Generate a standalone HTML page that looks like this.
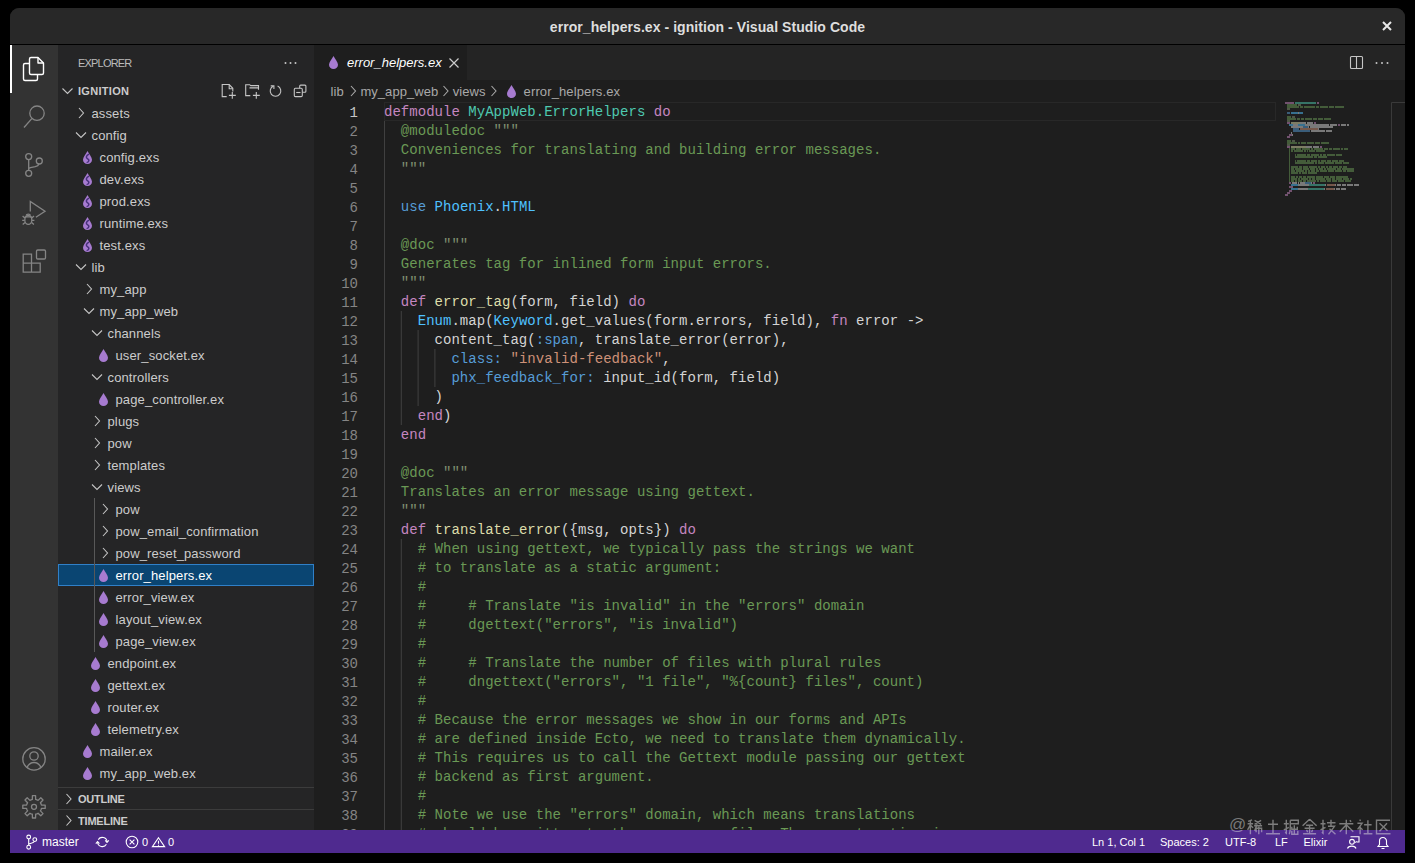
<!DOCTYPE html><html><head><meta charset="utf-8"><style>
*{margin:0;padding:0;box-sizing:border-box}
html,body{width:1415px;height:863px;overflow:hidden;background:#000}
body{position:relative;font-family:"Liberation Sans",sans-serif;color:#cccccc}
.a{position:absolute}
.win{position:absolute;left:10px;top:8px;width:1395px;height:845px;background:#1e1e1e;border-radius:9px 9px 0 0;overflow:hidden}
.mono{font-family:"Liberation Mono",monospace;font-size:14px;white-space:pre}
.row{position:absolute;left:58px;width:256px;height:22px;font-size:13px;line-height:22px;white-space:pre;color:#cccccc}
.ln{position:absolute;width:60px;text-align:right;font-family:"Liberation Mono",monospace;font-size:14px;line-height:19px;color:#858585}
.cl{position:absolute;left:384px;font-family:"Liberation Mono",monospace;font-size:14px;line-height:19px;white-space:pre;letter-spacing:0.028px}
.sb{position:absolute;top:831px;height:22px;line-height:22px;font-size:11px;color:#ffffff;white-space:pre}
</style></head><body>
<div class="win">
</div>

<div class="a" style="left:10px;top:8px;width:1395px;height:36px;background:#282828;border-radius:9px 9px 0 0"></div>
<div class="a" style="left:10px;top:44px;width:1395px;height:1px;background:#000000"></div>
<div class="a" style="left:10px;top:8px;width:1395px;height:36px;line-height:39px;text-align:center;font-weight:bold;font-size:14px;letter-spacing:0.06px;color:#dedede">error_helpers.ex - ignition - Visual Studio Code</div>
<div class="a" style="left:10px;top:45px;width:48px;height:786px;background:#333333"></div>
<div class="a" style="left:10px;top:45px;width:2px;height:48px;background:#ffffff"></div>
<div class="a" style="left:58px;top:45px;width:256px;height:786px;background:#252526"></div>
<div class="a" style="left:314px;top:45px;width:1091px;height:35px;background:#242424"></div>
<div class="a" style="left:314px;top:45px;width:153px;height:35px;background:#1e1e1e"></div>
<div class="a" style="left:314px;top:80px;width:1091px;height:751px;background:#1e1e1e"></div>
<div class="a" style="left:78px;top:52px;height:22px;line-height:22px;font-size:11px;letter-spacing:-0.8px;color:#bbbbbb">EXPLORER</div>
<div class="a" style="left:78px;top:80px;height:22px;line-height:22px;font-size:11px;font-weight:bold;letter-spacing:0.3px;color:#cccccc">IGNITION</div>
<div class="a" style="left:78px;top:787px;width:236px;height:1px;background:#3c3c3c"></div>
<div class="a" style="left:58px;top:787px;width:256px;height:1px;background:#3c3c3c"></div>
<div class="a" style="left:58px;top:809px;width:256px;height:1px;background:#3c3c3c"></div>
<div class="a" style="left:78px;top:788px;height:21px;line-height:22px;font-size:11px;font-weight:bold;letter-spacing:-0.25px;color:#cccccc">OUTLINE</div>
<div class="a" style="left:78px;top:810px;height:21px;line-height:22px;font-size:11px;font-weight:bold;letter-spacing:-0.2px;color:#cccccc">TIMELINE</div>
<div class="a" style="left:91.5px;top:103px;height:22px;line-height:22px;font-size:13px;letter-spacing:0.13px;white-space:pre;color:#cccccc">assets</div>
<div class="a" style="left:91.5px;top:125px;height:22px;line-height:22px;font-size:13px;letter-spacing:0.13px;white-space:pre;color:#cccccc">config</div>
<div class="a" style="left:99.5px;top:147px;height:22px;line-height:22px;font-size:13px;letter-spacing:0.13px;white-space:pre;color:#cccccc">config.exs</div>
<div class="a" style="left:99.5px;top:169px;height:22px;line-height:22px;font-size:13px;letter-spacing:0.13px;white-space:pre;color:#cccccc">dev.exs</div>
<div class="a" style="left:99.5px;top:191px;height:22px;line-height:22px;font-size:13px;letter-spacing:0.13px;white-space:pre;color:#cccccc">prod.exs</div>
<div class="a" style="left:99.5px;top:213px;height:22px;line-height:22px;font-size:13px;letter-spacing:0.13px;white-space:pre;color:#cccccc">runtime.exs</div>
<div class="a" style="left:99.5px;top:235px;height:22px;line-height:22px;font-size:13px;letter-spacing:0.13px;white-space:pre;color:#cccccc">test.exs</div>
<div class="a" style="left:91.5px;top:257px;height:22px;line-height:22px;font-size:13px;letter-spacing:0.13px;white-space:pre;color:#cccccc">lib</div>
<div class="a" style="left:99.5px;top:279px;height:22px;line-height:22px;font-size:13px;letter-spacing:0.13px;white-space:pre;color:#cccccc">my_app</div>
<div class="a" style="left:99.5px;top:301px;height:22px;line-height:22px;font-size:13px;letter-spacing:0.13px;white-space:pre;color:#cccccc">my_app_web</div>
<div class="a" style="left:107.5px;top:323px;height:22px;line-height:22px;font-size:13px;letter-spacing:0.13px;white-space:pre;color:#cccccc">channels</div>
<div class="a" style="left:115.5px;top:345px;height:22px;line-height:22px;font-size:13px;letter-spacing:0.13px;white-space:pre;color:#cccccc">user_socket.ex</div>
<div class="a" style="left:107.5px;top:367px;height:22px;line-height:22px;font-size:13px;letter-spacing:0.13px;white-space:pre;color:#cccccc">controllers</div>
<div class="a" style="left:115.5px;top:389px;height:22px;line-height:22px;font-size:13px;letter-spacing:0.13px;white-space:pre;color:#cccccc">page_controller.ex</div>
<div class="a" style="left:107.5px;top:411px;height:22px;line-height:22px;font-size:13px;letter-spacing:0.13px;white-space:pre;color:#cccccc">plugs</div>
<div class="a" style="left:107.5px;top:433px;height:22px;line-height:22px;font-size:13px;letter-spacing:0.13px;white-space:pre;color:#cccccc">pow</div>
<div class="a" style="left:107.5px;top:455px;height:22px;line-height:22px;font-size:13px;letter-spacing:0.13px;white-space:pre;color:#cccccc">templates</div>
<div class="a" style="left:107.5px;top:477px;height:22px;line-height:22px;font-size:13px;letter-spacing:0.13px;white-space:pre;color:#cccccc">views</div>
<div class="a" style="left:115.5px;top:499px;height:22px;line-height:22px;font-size:13px;letter-spacing:0.13px;white-space:pre;color:#cccccc">pow</div>
<div class="a" style="left:115.5px;top:521px;height:22px;line-height:22px;font-size:13px;letter-spacing:0.13px;white-space:pre;color:#cccccc">pow_email_confirmation</div>
<div class="a" style="left:115.5px;top:543px;height:22px;line-height:22px;font-size:13px;letter-spacing:0.13px;white-space:pre;color:#cccccc">pow_reset_password</div>
<div class="a" style="left:58px;top:564px;width:256px;height:22px;background:#0a4572;border:1px solid #3080c8"></div>
<div class="a" style="left:115.5px;top:565px;height:22px;line-height:22px;font-size:13px;letter-spacing:0.13px;white-space:pre;color:#ffffff">error_helpers.ex</div>
<div class="a" style="left:115.5px;top:587px;height:22px;line-height:22px;font-size:13px;letter-spacing:0.13px;white-space:pre;color:#cccccc">error_view.ex</div>
<div class="a" style="left:115.5px;top:609px;height:22px;line-height:22px;font-size:13px;letter-spacing:0.13px;white-space:pre;color:#cccccc">layout_view.ex</div>
<div class="a" style="left:115.5px;top:631px;height:22px;line-height:22px;font-size:13px;letter-spacing:0.13px;white-space:pre;color:#cccccc">page_view.ex</div>
<div class="a" style="left:107.5px;top:653px;height:22px;line-height:22px;font-size:13px;letter-spacing:0.13px;white-space:pre;color:#cccccc">endpoint.ex</div>
<div class="a" style="left:107.5px;top:675px;height:22px;line-height:22px;font-size:13px;letter-spacing:0.13px;white-space:pre;color:#cccccc">gettext.ex</div>
<div class="a" style="left:107.5px;top:697px;height:22px;line-height:22px;font-size:13px;letter-spacing:0.13px;white-space:pre;color:#cccccc">router.ex</div>
<div class="a" style="left:107.5px;top:719px;height:22px;line-height:22px;font-size:13px;letter-spacing:0.13px;white-space:pre;color:#cccccc">telemetry.ex</div>
<div class="a" style="left:99.5px;top:741px;height:22px;line-height:22px;font-size:13px;letter-spacing:0.13px;white-space:pre;color:#cccccc">mailer.ex</div>
<div class="a" style="left:99.5px;top:763px;height:22px;line-height:22px;font-size:13px;letter-spacing:0.13px;white-space:pre;color:#cccccc">my_app_web.ex</div>
<div class="a" style="left:347px;top:52px;height:22px;line-height:22px;font-size:13px;font-style:italic;color:#ffffff;white-space:pre">error_helpers.ex</div>
<div class="a" style="left:330.5px;top:81px;height:22px;line-height:22px;font-size:13px;letter-spacing:0.05px;color:#a9a9a9;white-space:pre">lib</div>
<div class="a" style="left:360.4px;top:81px;height:22px;line-height:22px;font-size:13px;letter-spacing:0.05px;color:#a9a9a9;white-space:pre">my_app_web</div>
<div class="a" style="left:452.8px;top:81px;height:22px;line-height:22px;font-size:13px;letter-spacing:0.05px;color:#a9a9a9;white-space:pre">views</div>
<div class="a" style="left:523.6px;top:81px;height:22px;line-height:22px;font-size:13px;letter-spacing:0.12px;color:#a9a9a9;white-space:pre">error_helpers.ex</div>
<div class="ln" style="left:298px;top:104px;color:#c6c6c6">1</div>
<div class="ln" style="left:298px;top:123px;color:#858585">2</div>
<div class="ln" style="left:298px;top:142px;color:#858585">3</div>
<div class="ln" style="left:298px;top:161px;color:#858585">4</div>
<div class="ln" style="left:298px;top:180px;color:#858585">5</div>
<div class="ln" style="left:298px;top:199px;color:#858585">6</div>
<div class="ln" style="left:298px;top:218px;color:#858585">7</div>
<div class="ln" style="left:298px;top:237px;color:#858585">8</div>
<div class="ln" style="left:298px;top:256px;color:#858585">9</div>
<div class="ln" style="left:298px;top:275px;color:#858585">10</div>
<div class="ln" style="left:298px;top:294px;color:#858585">11</div>
<div class="ln" style="left:298px;top:313px;color:#858585">12</div>
<div class="ln" style="left:298px;top:332px;color:#858585">13</div>
<div class="ln" style="left:298px;top:351px;color:#858585">14</div>
<div class="ln" style="left:298px;top:370px;color:#858585">15</div>
<div class="ln" style="left:298px;top:389px;color:#858585">16</div>
<div class="ln" style="left:298px;top:408px;color:#858585">17</div>
<div class="ln" style="left:298px;top:427px;color:#858585">18</div>
<div class="ln" style="left:298px;top:446px;color:#858585">19</div>
<div class="ln" style="left:298px;top:465px;color:#858585">20</div>
<div class="ln" style="left:298px;top:484px;color:#858585">21</div>
<div class="ln" style="left:298px;top:503px;color:#858585">22</div>
<div class="ln" style="left:298px;top:522px;color:#858585">23</div>
<div class="ln" style="left:298px;top:541px;color:#858585">24</div>
<div class="ln" style="left:298px;top:560px;color:#858585">25</div>
<div class="ln" style="left:298px;top:579px;color:#858585">26</div>
<div class="ln" style="left:298px;top:598px;color:#858585">27</div>
<div class="ln" style="left:298px;top:617px;color:#858585">28</div>
<div class="ln" style="left:298px;top:636px;color:#858585">29</div>
<div class="ln" style="left:298px;top:655px;color:#858585">30</div>
<div class="ln" style="left:298px;top:674px;color:#858585">31</div>
<div class="ln" style="left:298px;top:693px;color:#858585">32</div>
<div class="ln" style="left:298px;top:712px;color:#858585">33</div>
<div class="ln" style="left:298px;top:731px;color:#858585">34</div>
<div class="ln" style="left:298px;top:750px;color:#858585">35</div>
<div class="ln" style="left:298px;top:769px;color:#858585">36</div>
<div class="ln" style="left:298px;top:788px;color:#858585">37</div>
<div class="ln" style="left:298px;top:807px;color:#858585">38</div>
<div class="ln" style="left:298px;top:826px;color:#858585">39</div>
<div class="a" style="left:384px;top:102px;width:892px;height:19px;border:1px solid #282828"></div>
<div class="cl" style="top:103px"><span style="color:#c586c0">defmodule</span><span style="color:#d4d4d4"> </span><span style="color:#4ec9b0">MyAppWeb.ErrorHelpers</span><span style="color:#d4d4d4"> </span><span style="color:#c586c0">do</span></div>
<div class="cl" style="top:122px"><span style="color:#d4d4d4">  </span><span style="color:#6a9955">@moduledoc</span><span style="color:#d4d4d4"> </span><span style="color:#7f8f70">&quot;&quot;&quot;</span></div>
<div class="cl" style="top:141px"><span style="color:#d4d4d4">  </span><span style="color:#6a9955">Conveniences for translating and building error messages.</span></div>
<div class="cl" style="top:160px"><span style="color:#d4d4d4">  </span><span style="color:#7f8f70">&quot;&quot;&quot;</span></div>
<div class="cl" style="top:179px"></div>
<div class="cl" style="top:198px"><span style="color:#d4d4d4">  </span><span style="color:#569cd6">use</span><span style="color:#d4d4d4"> </span><span style="color:#4fc1ff">Phoenix</span><span style="color:#d4d4d4">.</span><span style="color:#4fc1ff">HTML</span></div>
<div class="cl" style="top:217px"></div>
<div class="cl" style="top:236px"><span style="color:#d4d4d4">  </span><span style="color:#6a9955">@doc</span><span style="color:#d4d4d4"> </span><span style="color:#7f8f70">&quot;&quot;&quot;</span></div>
<div class="cl" style="top:255px"><span style="color:#d4d4d4">  </span><span style="color:#6a9955">Generates tag for inlined form input errors.</span></div>
<div class="cl" style="top:274px"><span style="color:#d4d4d4">  </span><span style="color:#7f8f70">&quot;&quot;&quot;</span></div>
<div class="cl" style="top:293px"><span style="color:#d4d4d4">  </span><span style="color:#c586c0">def</span><span style="color:#d4d4d4"> </span><span style="color:#dcdcaa">error_tag</span><span style="color:#d4d4d4">(form, field) </span><span style="color:#c586c0">do</span></div>
<div class="cl" style="top:312px"><span style="color:#d4d4d4">    </span><span style="color:#4fc1ff">Enum</span><span style="color:#d4d4d4">.map(</span><span style="color:#4fc1ff">Keyword</span><span style="color:#d4d4d4">.get_values(form.errors, field), </span><span style="color:#c586c0">fn</span><span style="color:#d4d4d4"> error -&gt;</span></div>
<div class="cl" style="top:331px"><span style="color:#d4d4d4">      </span><span style="color:#d4d4d4">content_tag(</span><span style="color:#569cd6">:span</span><span style="color:#d4d4d4">, translate_error(error),</span></div>
<div class="cl" style="top:350px"><span style="color:#d4d4d4">        </span><span style="color:#569cd6">class:</span><span style="color:#d4d4d4"> </span><span style="color:#ce9178">&quot;invalid-feedback&quot;</span><span style="color:#d4d4d4">,</span></div>
<div class="cl" style="top:369px"><span style="color:#d4d4d4">        </span><span style="color:#569cd6">phx_feedback_for:</span><span style="color:#d4d4d4"> input_id(form, field)</span></div>
<div class="cl" style="top:388px"><span style="color:#d4d4d4">      </span><span style="color:#d4d4d4">)</span></div>
<div class="cl" style="top:407px"><span style="color:#d4d4d4">    </span><span style="color:#c586c0">end</span><span style="color:#d4d4d4">)</span></div>
<div class="cl" style="top:426px"><span style="color:#d4d4d4">  </span><span style="color:#c586c0">end</span></div>
<div class="cl" style="top:445px"></div>
<div class="cl" style="top:464px"><span style="color:#d4d4d4">  </span><span style="color:#6a9955">@doc</span><span style="color:#d4d4d4"> </span><span style="color:#7f8f70">&quot;&quot;&quot;</span></div>
<div class="cl" style="top:483px"><span style="color:#d4d4d4">  </span><span style="color:#6a9955">Translates an error message using gettext.</span></div>
<div class="cl" style="top:502px"><span style="color:#d4d4d4">  </span><span style="color:#7f8f70">&quot;&quot;&quot;</span></div>
<div class="cl" style="top:521px"><span style="color:#d4d4d4">  </span><span style="color:#c586c0">def</span><span style="color:#d4d4d4"> </span><span style="color:#dcdcaa">translate_error</span><span style="color:#d4d4d4">({msg, opts}) </span><span style="color:#c586c0">do</span></div>
<div class="cl" style="top:540px"><span style="color:#d4d4d4">    </span><span style="color:#6a9955"># When using gettext, we typically pass the strings we want</span></div>
<div class="cl" style="top:559px"><span style="color:#d4d4d4">    </span><span style="color:#6a9955"># to translate as a static argument:</span></div>
<div class="cl" style="top:578px"><span style="color:#d4d4d4">    </span><span style="color:#6a9955">#</span></div>
<div class="cl" style="top:597px"><span style="color:#d4d4d4">    </span><span style="color:#6a9955">#     # Translate &quot;is invalid&quot; in the &quot;errors&quot; domain</span></div>
<div class="cl" style="top:616px"><span style="color:#d4d4d4">    </span><span style="color:#6a9955">#     dgettext(&quot;errors&quot;, &quot;is invalid&quot;)</span></div>
<div class="cl" style="top:635px"><span style="color:#d4d4d4">    </span><span style="color:#6a9955">#</span></div>
<div class="cl" style="top:654px"><span style="color:#d4d4d4">    </span><span style="color:#6a9955">#     # Translate the number of files with plural rules</span></div>
<div class="cl" style="top:673px"><span style="color:#d4d4d4">    </span><span style="color:#6a9955">#     dngettext(&quot;errors&quot;, &quot;1 file&quot;, &quot;%{count} files&quot;, count)</span></div>
<div class="cl" style="top:692px"><span style="color:#d4d4d4">    </span><span style="color:#6a9955">#</span></div>
<div class="cl" style="top:711px"><span style="color:#d4d4d4">    </span><span style="color:#6a9955"># Because the error messages we show in our forms and APIs</span></div>
<div class="cl" style="top:730px"><span style="color:#d4d4d4">    </span><span style="color:#6a9955"># are defined inside Ecto, we need to translate them dynamically.</span></div>
<div class="cl" style="top:749px"><span style="color:#d4d4d4">    </span><span style="color:#6a9955"># This requires us to call the Gettext module passing our gettext</span></div>
<div class="cl" style="top:768px"><span style="color:#d4d4d4">    </span><span style="color:#6a9955"># backend as first argument.</span></div>
<div class="cl" style="top:787px"><span style="color:#d4d4d4">    </span><span style="color:#6a9955">#</span></div>
<div class="cl" style="top:806px"><span style="color:#d4d4d4">    </span><span style="color:#6a9955"># Note we use the &quot;errors&quot; domain, which means translations</span></div>
<div class="cl" style="top:825px"><span style="color:#d4d4d4">    </span><span style="color:#6a9955"># should be written to the errors.po file. The :count option is</span></div>
<div class="a" style="left:10px;top:830px;width:1395px;height:23px;background:#4f2a8f"></div>
<div class="sb" style="left:42px;font-size:12px">master</div>
<div class="sb" style="left:142px">0</div>
<div class="sb" style="left:168px">0</div>
<div class="sb" style="left:1092px">Ln 1, Col 1</div>
<div class="sb" style="left:1160px">Spaces: 2</div>
<div class="sb" style="left:1225px">UTF-8</div>
<div class="sb" style="left:1275px">LF</div>
<div class="sb" style="left:1303.5px">Elixir</div>
<svg class="a" style="left:0;top:0" width="1415" height="863" viewBox="0 0 1415 863"><path d="M62.5 88.5 L67.5 93.5 L72.5 88.5" fill="none" stroke="#c5c5c5" stroke-width="1.1"/><path d="M79.0 108 L83.5 113 L79.0 118" fill="none" stroke="#c5c5c5" stroke-width="1.1"/><path d="M76 132.5 L81 137.5 L86 132.5" fill="none" stroke="#c5c5c5" stroke-width="1.1"/><path d="M87.5 151 C86 154 83 157 83 159.8 C83 162.3 85 164 87.5 164 C90 164 92 162.3 92 159.8 C92 157 89 154 87.5 151 Z" fill="#a77bd0"/><path d="M89 154.2 C86.2 155.6 85.6 157.6 87.4 158.6 C89.6 159.8 89.4 161.8 86.6 162.6" fill="none" stroke="#47307a" stroke-width="1.5"/><path d="M87.5 173 C86 176 83 179 83 181.8 C83 184.3 85 186 87.5 186 C90 186 92 184.3 92 181.8 C92 179 89 176 87.5 173 Z" fill="#a77bd0"/><path d="M89 176.2 C86.2 177.6 85.6 179.6 87.4 180.6 C89.6 181.8 89.4 183.8 86.6 184.6" fill="none" stroke="#47307a" stroke-width="1.5"/><path d="M87.5 195 C86 198 83 201 83 203.8 C83 206.3 85 208 87.5 208 C90 208 92 206.3 92 203.8 C92 201 89 198 87.5 195 Z" fill="#a77bd0"/><path d="M89 198.2 C86.2 199.6 85.6 201.6 87.4 202.6 C89.6 203.8 89.4 205.8 86.6 206.6" fill="none" stroke="#47307a" stroke-width="1.5"/><path d="M87.5 217 C86 220 83 223 83 225.8 C83 228.3 85 230 87.5 230 C90 230 92 228.3 92 225.8 C92 223 89 220 87.5 217 Z" fill="#a77bd0"/><path d="M89 220.2 C86.2 221.6 85.6 223.6 87.4 224.6 C89.6 225.8 89.4 227.8 86.6 228.6" fill="none" stroke="#47307a" stroke-width="1.5"/><path d="M87.5 239 C86 242 83 245 83 247.8 C83 250.3 85 252 87.5 252 C90 252 92 250.3 92 247.8 C92 245 89 242 87.5 239 Z" fill="#a77bd0"/><path d="M89 242.2 C86.2 243.6 85.6 245.6 87.4 246.6 C89.6 247.8 89.4 249.8 86.6 250.6" fill="none" stroke="#47307a" stroke-width="1.5"/><path d="M76 264.5 L81 269.5 L86 264.5" fill="none" stroke="#c5c5c5" stroke-width="1.1"/><path d="M87.0 284 L91.5 289 L87.0 294" fill="none" stroke="#c5c5c5" stroke-width="1.1"/><path d="M84 308.5 L89 313.5 L94 308.5" fill="none" stroke="#c5c5c5" stroke-width="1.1"/><path d="M92 330.5 L97 335.5 L102 330.5" fill="none" stroke="#c5c5c5" stroke-width="1.1"/><path d="M103.5 349 C102 352 99 355 99 357.8 C99 360.3 101 362 103.5 362 C106 362 108 360.3 108 357.8 C108 355 105 352 103.5 349 Z" fill="#a77bd0"/><path d="M92 374.5 L97 379.5 L102 374.5" fill="none" stroke="#c5c5c5" stroke-width="1.1"/><path d="M103.5 393 C102 396 99 399 99 401.8 C99 404.3 101 406 103.5 406 C106 406 108 404.3 108 401.8 C108 399 105 396 103.5 393 Z" fill="#a77bd0"/><path d="M95.0 416 L99.5 421 L95.0 426" fill="none" stroke="#c5c5c5" stroke-width="1.1"/><path d="M95.0 438 L99.5 443 L95.0 448" fill="none" stroke="#c5c5c5" stroke-width="1.1"/><path d="M95.0 460 L99.5 465 L95.0 470" fill="none" stroke="#c5c5c5" stroke-width="1.1"/><path d="M92 484.5 L97 489.5 L102 484.5" fill="none" stroke="#c5c5c5" stroke-width="1.1"/><path d="M103.0 504 L107.5 509 L103.0 514" fill="none" stroke="#c5c5c5" stroke-width="1.1"/><path d="M103.0 526 L107.5 531 L103.0 536" fill="none" stroke="#c5c5c5" stroke-width="1.1"/><path d="M103.0 548 L107.5 553 L103.0 558" fill="none" stroke="#c5c5c5" stroke-width="1.1"/><path d="M103.5 569 C102 572 99 575 99 577.8 C99 580.3 101 582 103.5 582 C106 582 108 580.3 108 577.8 C108 575 105 572 103.5 569 Z" fill="#a77bd0"/><path d="M103.5 591 C102 594 99 597 99 599.8 C99 602.3 101 604 103.5 604 C106 604 108 602.3 108 599.8 C108 597 105 594 103.5 591 Z" fill="#a77bd0"/><path d="M103.5 613 C102 616 99 619 99 621.8 C99 624.3 101 626 103.5 626 C106 626 108 624.3 108 621.8 C108 619 105 616 103.5 613 Z" fill="#a77bd0"/><path d="M103.5 635 C102 638 99 641 99 643.8 C99 646.3 101 648 103.5 648 C106 648 108 646.3 108 643.8 C108 641 105 638 103.5 635 Z" fill="#a77bd0"/><path d="M95.5 657 C94 660 91 663 91 665.8 C91 668.3 93 670 95.5 670 C98 670 100 668.3 100 665.8 C100 663 97 660 95.5 657 Z" fill="#a77bd0"/><path d="M95.5 679 C94 682 91 685 91 687.8 C91 690.3 93 692 95.5 692 C98 692 100 690.3 100 687.8 C100 685 97 682 95.5 679 Z" fill="#a77bd0"/><path d="M95.5 701 C94 704 91 707 91 709.8 C91 712.3 93 714 95.5 714 C98 714 100 712.3 100 709.8 C100 707 97 704 95.5 701 Z" fill="#a77bd0"/><path d="M95.5 723 C94 726 91 729 91 731.8 C91 734.3 93 736 95.5 736 C98 736 100 734.3 100 731.8 C100 729 97 726 95.5 723 Z" fill="#a77bd0"/><path d="M87.5 745 C86 748 83 751 83 753.8 C83 756.3 85 758 87.5 758 C90 758 92 756.3 92 753.8 C92 751 89 748 87.5 745 Z" fill="#a77bd0"/><path d="M87.5 767 C86 770 83 773 83 775.8 C83 778.3 85 780 87.5 780 C90 780 92 778.3 92 775.8 C92 773 89 770 87.5 767 Z" fill="#a77bd0"/><line x1="94.5" y1="498" x2="94.5" y2="652" stroke="#585858" stroke-width="1"/><g fill="none" stroke="#c5c5c5" stroke-width="1.1">
<path d="M226.7 96.6 h-4.5 v-12.1 h7 l3.6 3.8 v3.2"/>
<path d="M229.2 84.6 v4.2 h3.6"/>
<path d="M232.3 92 v6.8 M228.9 95.4 h6.9"/>
<path d="M250.3 95.6 h-4.6 v-10.9 h4 l1 0.9 h7.8 v4.2 M249.5 87.9 h9"/>
<path d="M256.3 92 v6.8 M252.9 95.4 h6.9"/>
<path d="M273.2 86.2 A5.3 5.3 0 1 0 277.6 86.1"/>
<path d="M270.7 85.9 h3.2 v3.1"/>
<path d="M299.7 88.2 v-2.1 a1 1 0 0 1 1 -1 h4.2 a1 1 0 0 1 1 1 v5.2 a1 1 0 0 1 -1 1 h-2.6"/>
<rect x="294.3" y="88.3" width="8" height="8.3" rx="1.1"/>
<path d="M296.2 92.5 h4.3"/>
</g><circle cx="285.5" cy="63" r="1" fill="#c5c5c5"/><circle cx="290.5" cy="63" r="1" fill="#c5c5c5"/><circle cx="295.5" cy="63" r="1" fill="#c5c5c5"/><path d="M66.5 794 L71 799 L66.5 804" fill="none" stroke="#c5c5c5" stroke-width="1.1"/><path d="M66.5 815.5 L71 820.5 L66.5 825.5" fill="none" stroke="#c5c5c5" stroke-width="1.1"/><path d="M333.5 56 C332 59 329 62 329 64.8 C329 67.3 331 69 333.5 69 C336 69 338 67.3 338 64.8 C338 62 335 59 333.5 56 Z" fill="#a77bd0"/><path d="M449.5 58.5 L458.5 67.5 M458.5 58.5 L449.5 67.5" stroke="#cccccc" stroke-width="1.2"/><g fill="none" stroke="#c5c5c5" stroke-width="1.1"><rect x="1350.5" y="56.5" width="12" height="12" rx="1"/><path d="M1356.5 56.5 v12"/></g><circle cx="1376.5" cy="63" r="1" fill="#c5c5c5"/><circle cx="1382" cy="63" r="1" fill="#c5c5c5"/><circle cx="1387.5" cy="63" r="1" fill="#c5c5c5"/><path d="M1383 22 L1391 30 M1391 22 L1383 30" stroke="#e8e8e8" stroke-width="2"/><path d="M351.0 86 L355.5 91 L351.0 96" fill="none" stroke="#a9a9a9" stroke-width="1.1"/><path d="M443.5 86 L448 91 L443.5 96" fill="none" stroke="#a9a9a9" stroke-width="1.1"/><path d="M491.5 86 L496 91 L491.5 96" fill="none" stroke="#a9a9a9" stroke-width="1.1"/><path d="M511.5 85 C510 88 507 91 507 93.8 C507 96.3 509 98 511.5 98 C514 98 516 96.3 516 93.8 C516 91 513 88 511.5 85 Z" fill="#a77bd0"/><line x1="384.5" y1="121" x2="384.5" y2="830" stroke="#404040" stroke-width="1"/><line x1="401.3" y1="311" x2="401.3" y2="425" stroke="#404040" stroke-width="1"/><line x1="418.1" y1="330" x2="418.1" y2="406" stroke="#404040" stroke-width="1"/><line x1="434.9" y1="349" x2="434.9" y2="387" stroke="#404040" stroke-width="1"/><line x1="401.3" y1="539" x2="401.3" y2="830" stroke="#404040" stroke-width="1"/><rect x="1285" y="102" width="9" height="2" fill="#c586c0" opacity="0.5"/><rect x="1295" y="102" width="21" height="2" fill="#4ec9b0" opacity="0.5"/><rect x="1317" y="102" width="2" height="2" fill="#c586c0" opacity="0.5"/><rect x="1287" y="104" width="10" height="2" fill="#6a9955" opacity="0.5"/><rect x="1298" y="104" width="3" height="2" fill="#7f8f70" opacity="0.5"/><rect x="1287" y="106" width="12" height="2" fill="#6a9955" opacity="0.5"/><rect x="1300" y="106" width="3" height="2" fill="#6a9955" opacity="0.5"/><rect x="1304" y="106" width="11" height="2" fill="#6a9955" opacity="0.5"/><rect x="1316" y="106" width="3" height="2" fill="#6a9955" opacity="0.5"/><rect x="1320" y="106" width="8" height="2" fill="#6a9955" opacity="0.5"/><rect x="1329" y="106" width="5" height="2" fill="#6a9955" opacity="0.5"/><rect x="1335" y="106" width="9" height="2" fill="#6a9955" opacity="0.5"/><rect x="1287" y="108" width="3" height="2" fill="#7f8f70" opacity="0.5"/><rect x="1287" y="112" width="3" height="2" fill="#569cd6" opacity="0.5"/><rect x="1291" y="112" width="7" height="2" fill="#4fc1ff" opacity="0.5"/><rect x="1298" y="112" width="1" height="2" fill="#d4d4d4" opacity="0.5"/><rect x="1299" y="112" width="4" height="2" fill="#4fc1ff" opacity="0.5"/><rect x="1287" y="116" width="4" height="2" fill="#6a9955" opacity="0.5"/><rect x="1292" y="116" width="3" height="2" fill="#7f8f70" opacity="0.5"/><rect x="1287" y="118" width="9" height="2" fill="#6a9955" opacity="0.5"/><rect x="1297" y="118" width="3" height="2" fill="#6a9955" opacity="0.5"/><rect x="1301" y="118" width="3" height="2" fill="#6a9955" opacity="0.5"/><rect x="1305" y="118" width="7" height="2" fill="#6a9955" opacity="0.5"/><rect x="1313" y="118" width="4" height="2" fill="#6a9955" opacity="0.5"/><rect x="1318" y="118" width="5" height="2" fill="#6a9955" opacity="0.5"/><rect x="1324" y="118" width="7" height="2" fill="#6a9955" opacity="0.5"/><rect x="1287" y="120" width="3" height="2" fill="#7f8f70" opacity="0.5"/><rect x="1287" y="122" width="3" height="2" fill="#c586c0" opacity="0.5"/><rect x="1291" y="122" width="9" height="2" fill="#dcdcaa" opacity="0.5"/><rect x="1300" y="122" width="6" height="2" fill="#d4d4d4" opacity="0.5"/><rect x="1307" y="122" width="6" height="2" fill="#d4d4d4" opacity="0.5"/><rect x="1314" y="122" width="2" height="2" fill="#c586c0" opacity="0.5"/><rect x="1289" y="124" width="4" height="2" fill="#4fc1ff" opacity="0.5"/><rect x="1293" y="124" width="5" height="2" fill="#d4d4d4" opacity="0.5"/><rect x="1298" y="124" width="7" height="2" fill="#4fc1ff" opacity="0.5"/><rect x="1305" y="124" width="24" height="2" fill="#d4d4d4" opacity="0.5"/><rect x="1330" y="124" width="7" height="2" fill="#d4d4d4" opacity="0.5"/><rect x="1338" y="124" width="2" height="2" fill="#c586c0" opacity="0.5"/><rect x="1341" y="124" width="5" height="2" fill="#d4d4d4" opacity="0.5"/><rect x="1347" y="124" width="2" height="2" fill="#d4d4d4" opacity="0.5"/><rect x="1291" y="126" width="12" height="2" fill="#d4d4d4" opacity="0.5"/><rect x="1303" y="126" width="5" height="2" fill="#569cd6" opacity="0.5"/><rect x="1308" y="126" width="1" height="2" fill="#d4d4d4" opacity="0.5"/><rect x="1310" y="126" width="23" height="2" fill="#d4d4d4" opacity="0.5"/><rect x="1293" y="128" width="6" height="2" fill="#569cd6" opacity="0.5"/><rect x="1300" y="128" width="18" height="2" fill="#ce9178" opacity="0.5"/><rect x="1318" y="128" width="1" height="2" fill="#d4d4d4" opacity="0.5"/><rect x="1293" y="130" width="17" height="2" fill="#569cd6" opacity="0.5"/><rect x="1311" y="130" width="14" height="2" fill="#d4d4d4" opacity="0.5"/><rect x="1326" y="130" width="6" height="2" fill="#d4d4d4" opacity="0.5"/><rect x="1291" y="132" width="1" height="2" fill="#d4d4d4" opacity="0.5"/><rect x="1289" y="134" width="3" height="2" fill="#c586c0" opacity="0.5"/><rect x="1292" y="134" width="1" height="2" fill="#d4d4d4" opacity="0.5"/><rect x="1287" y="136" width="3" height="2" fill="#c586c0" opacity="0.5"/><rect x="1287" y="140" width="4" height="2" fill="#6a9955" opacity="0.5"/><rect x="1292" y="140" width="3" height="2" fill="#7f8f70" opacity="0.5"/><rect x="1287" y="142" width="10" height="2" fill="#6a9955" opacity="0.5"/><rect x="1298" y="142" width="2" height="2" fill="#6a9955" opacity="0.5"/><rect x="1301" y="142" width="5" height="2" fill="#6a9955" opacity="0.5"/><rect x="1307" y="142" width="7" height="2" fill="#6a9955" opacity="0.5"/><rect x="1315" y="142" width="5" height="2" fill="#6a9955" opacity="0.5"/><rect x="1321" y="142" width="8" height="2" fill="#6a9955" opacity="0.5"/><rect x="1287" y="144" width="3" height="2" fill="#7f8f70" opacity="0.5"/><rect x="1287" y="146" width="3" height="2" fill="#c586c0" opacity="0.5"/><rect x="1291" y="146" width="15" height="2" fill="#dcdcaa" opacity="0.5"/><rect x="1306" y="146" width="6" height="2" fill="#d4d4d4" opacity="0.5"/><rect x="1313" y="146" width="6" height="2" fill="#d4d4d4" opacity="0.5"/><rect x="1320" y="146" width="2" height="2" fill="#c586c0" opacity="0.5"/><rect x="1289" y="148" width="1" height="2" fill="#6a9955" opacity="0.5"/><rect x="1291" y="148" width="4" height="2" fill="#6a9955" opacity="0.5"/><rect x="1296" y="148" width="5" height="2" fill="#6a9955" opacity="0.5"/><rect x="1302" y="148" width="8" height="2" fill="#6a9955" opacity="0.5"/><rect x="1311" y="148" width="2" height="2" fill="#6a9955" opacity="0.5"/><rect x="1314" y="148" width="9" height="2" fill="#6a9955" opacity="0.5"/><rect x="1324" y="148" width="4" height="2" fill="#6a9955" opacity="0.5"/><rect x="1329" y="148" width="3" height="2" fill="#6a9955" opacity="0.5"/><rect x="1333" y="148" width="7" height="2" fill="#6a9955" opacity="0.5"/><rect x="1341" y="148" width="2" height="2" fill="#6a9955" opacity="0.5"/><rect x="1344" y="148" width="4" height="2" fill="#6a9955" opacity="0.5"/><rect x="1289" y="150" width="1" height="2" fill="#6a9955" opacity="0.5"/><rect x="1291" y="150" width="2" height="2" fill="#6a9955" opacity="0.5"/><rect x="1294" y="150" width="9" height="2" fill="#6a9955" opacity="0.5"/><rect x="1304" y="150" width="2" height="2" fill="#6a9955" opacity="0.5"/><rect x="1307" y="150" width="1" height="2" fill="#6a9955" opacity="0.5"/><rect x="1309" y="150" width="6" height="2" fill="#6a9955" opacity="0.5"/><rect x="1316" y="150" width="9" height="2" fill="#6a9955" opacity="0.5"/><rect x="1289" y="152" width="1" height="2" fill="#6a9955" opacity="0.5"/><rect x="1289" y="154" width="1" height="2" fill="#6a9955" opacity="0.5"/><rect x="1295" y="154" width="1" height="2" fill="#6a9955" opacity="0.5"/><rect x="1297" y="154" width="9" height="2" fill="#6a9955" opacity="0.5"/><rect x="1307" y="154" width="3" height="2" fill="#6a9955" opacity="0.5"/><rect x="1311" y="154" width="8" height="2" fill="#6a9955" opacity="0.5"/><rect x="1320" y="154" width="2" height="2" fill="#6a9955" opacity="0.5"/><rect x="1323" y="154" width="3" height="2" fill="#6a9955" opacity="0.5"/><rect x="1327" y="154" width="8" height="2" fill="#6a9955" opacity="0.5"/><rect x="1336" y="154" width="6" height="2" fill="#6a9955" opacity="0.5"/><rect x="1289" y="156" width="1" height="2" fill="#6a9955" opacity="0.5"/><rect x="1295" y="156" width="18" height="2" fill="#6a9955" opacity="0.5"/><rect x="1314" y="156" width="3" height="2" fill="#6a9955" opacity="0.5"/><rect x="1318" y="156" width="9" height="2" fill="#6a9955" opacity="0.5"/><rect x="1289" y="158" width="1" height="2" fill="#6a9955" opacity="0.5"/><rect x="1289" y="160" width="1" height="2" fill="#6a9955" opacity="0.5"/><rect x="1295" y="160" width="1" height="2" fill="#6a9955" opacity="0.5"/><rect x="1297" y="160" width="9" height="2" fill="#6a9955" opacity="0.5"/><rect x="1307" y="160" width="3" height="2" fill="#6a9955" opacity="0.5"/><rect x="1311" y="160" width="6" height="2" fill="#6a9955" opacity="0.5"/><rect x="1318" y="160" width="2" height="2" fill="#6a9955" opacity="0.5"/><rect x="1321" y="160" width="5" height="2" fill="#6a9955" opacity="0.5"/><rect x="1327" y="160" width="4" height="2" fill="#6a9955" opacity="0.5"/><rect x="1332" y="160" width="6" height="2" fill="#6a9955" opacity="0.5"/><rect x="1339" y="160" width="5" height="2" fill="#6a9955" opacity="0.5"/><rect x="1289" y="162" width="1" height="2" fill="#6a9955" opacity="0.5"/><rect x="1295" y="162" width="19" height="2" fill="#6a9955" opacity="0.5"/><rect x="1315" y="162" width="2" height="2" fill="#6a9955" opacity="0.5"/><rect x="1318" y="162" width="6" height="2" fill="#6a9955" opacity="0.5"/><rect x="1325" y="162" width="9" height="2" fill="#6a9955" opacity="0.5"/><rect x="1335" y="162" width="7" height="2" fill="#6a9955" opacity="0.5"/><rect x="1343" y="162" width="6" height="2" fill="#6a9955" opacity="0.5"/><rect x="1289" y="164" width="1" height="2" fill="#6a9955" opacity="0.5"/><rect x="1289" y="166" width="1" height="2" fill="#6a9955" opacity="0.5"/><rect x="1291" y="166" width="7" height="2" fill="#6a9955" opacity="0.5"/><rect x="1299" y="166" width="3" height="2" fill="#6a9955" opacity="0.5"/><rect x="1303" y="166" width="5" height="2" fill="#6a9955" opacity="0.5"/><rect x="1309" y="166" width="8" height="2" fill="#6a9955" opacity="0.5"/><rect x="1318" y="166" width="2" height="2" fill="#6a9955" opacity="0.5"/><rect x="1321" y="166" width="4" height="2" fill="#6a9955" opacity="0.5"/><rect x="1326" y="166" width="2" height="2" fill="#6a9955" opacity="0.5"/><rect x="1329" y="166" width="3" height="2" fill="#6a9955" opacity="0.5"/><rect x="1333" y="166" width="5" height="2" fill="#6a9955" opacity="0.5"/><rect x="1339" y="166" width="3" height="2" fill="#6a9955" opacity="0.5"/><rect x="1343" y="166" width="4" height="2" fill="#6a9955" opacity="0.5"/><rect x="1289" y="168" width="1" height="2" fill="#6a9955" opacity="0.5"/><rect x="1291" y="168" width="3" height="2" fill="#6a9955" opacity="0.5"/><rect x="1295" y="168" width="7" height="2" fill="#6a9955" opacity="0.5"/><rect x="1303" y="168" width="6" height="2" fill="#6a9955" opacity="0.5"/><rect x="1310" y="168" width="5" height="2" fill="#6a9955" opacity="0.5"/><rect x="1316" y="168" width="2" height="2" fill="#6a9955" opacity="0.5"/><rect x="1319" y="168" width="4" height="2" fill="#6a9955" opacity="0.5"/><rect x="1324" y="168" width="2" height="2" fill="#6a9955" opacity="0.5"/><rect x="1327" y="168" width="9" height="2" fill="#6a9955" opacity="0.5"/><rect x="1337" y="168" width="4" height="2" fill="#6a9955" opacity="0.5"/><rect x="1342" y="168" width="12" height="2" fill="#6a9955" opacity="0.5"/><rect x="1289" y="170" width="1" height="2" fill="#6a9955" opacity="0.5"/><rect x="1291" y="170" width="4" height="2" fill="#6a9955" opacity="0.5"/><rect x="1296" y="170" width="8" height="2" fill="#6a9955" opacity="0.5"/><rect x="1305" y="170" width="2" height="2" fill="#6a9955" opacity="0.5"/><rect x="1308" y="170" width="2" height="2" fill="#6a9955" opacity="0.5"/><rect x="1311" y="170" width="4" height="2" fill="#6a9955" opacity="0.5"/><rect x="1316" y="170" width="3" height="2" fill="#6a9955" opacity="0.5"/><rect x="1320" y="170" width="7" height="2" fill="#6a9955" opacity="0.5"/><rect x="1328" y="170" width="6" height="2" fill="#6a9955" opacity="0.5"/><rect x="1335" y="170" width="7" height="2" fill="#6a9955" opacity="0.5"/><rect x="1343" y="170" width="3" height="2" fill="#6a9955" opacity="0.5"/><rect x="1347" y="170" width="7" height="2" fill="#6a9955" opacity="0.5"/><rect x="1289" y="172" width="1" height="2" fill="#6a9955" opacity="0.5"/><rect x="1291" y="172" width="7" height="2" fill="#6a9955" opacity="0.5"/><rect x="1299" y="172" width="2" height="2" fill="#6a9955" opacity="0.5"/><rect x="1302" y="172" width="5" height="2" fill="#6a9955" opacity="0.5"/><rect x="1308" y="172" width="9" height="2" fill="#6a9955" opacity="0.5"/><rect x="1289" y="174" width="1" height="2" fill="#6a9955" opacity="0.5"/><rect x="1289" y="176" width="1" height="2" fill="#6a9955" opacity="0.5"/><rect x="1291" y="176" width="4" height="2" fill="#6a9955" opacity="0.5"/><rect x="1296" y="176" width="2" height="2" fill="#6a9955" opacity="0.5"/><rect x="1299" y="176" width="3" height="2" fill="#6a9955" opacity="0.5"/><rect x="1303" y="176" width="3" height="2" fill="#6a9955" opacity="0.5"/><rect x="1307" y="176" width="8" height="2" fill="#6a9955" opacity="0.5"/><rect x="1316" y="176" width="7" height="2" fill="#6a9955" opacity="0.5"/><rect x="1324" y="176" width="5" height="2" fill="#6a9955" opacity="0.5"/><rect x="1330" y="176" width="5" height="2" fill="#6a9955" opacity="0.5"/><rect x="1336" y="176" width="12" height="2" fill="#6a9955" opacity="0.5"/><rect x="1289" y="178" width="1" height="2" fill="#6a9955" opacity="0.5"/><rect x="1291" y="178" width="6" height="2" fill="#6a9955" opacity="0.5"/><rect x="1298" y="178" width="2" height="2" fill="#6a9955" opacity="0.5"/><rect x="1301" y="178" width="7" height="2" fill="#6a9955" opacity="0.5"/><rect x="1309" y="178" width="2" height="2" fill="#6a9955" opacity="0.5"/><rect x="1312" y="178" width="3" height="2" fill="#6a9955" opacity="0.5"/><rect x="1316" y="178" width="9" height="2" fill="#6a9955" opacity="0.5"/><rect x="1326" y="178" width="5" height="2" fill="#6a9955" opacity="0.5"/><rect x="1332" y="178" width="3" height="2" fill="#6a9955" opacity="0.5"/><rect x="1336" y="178" width="6" height="2" fill="#6a9955" opacity="0.5"/><rect x="1343" y="178" width="6" height="2" fill="#6a9955" opacity="0.5"/><rect x="1350" y="178" width="2" height="2" fill="#6a9955" opacity="0.5"/><rect x="1289" y="180" width="1" height="2" fill="#6a9955" opacity="0.5"/><rect x="1291" y="180" width="3" height="2" fill="#6a9955" opacity="0.5"/><rect x="1295" y="180" width="2" height="2" fill="#6a9955" opacity="0.5"/><rect x="1298" y="180" width="4" height="2" fill="#6a9955" opacity="0.5"/><rect x="1303" y="180" width="3" height="2" fill="#6a9955" opacity="0.5"/><rect x="1307" y="180" width="9" height="2" fill="#6a9955" opacity="0.5"/><rect x="1317" y="180" width="2" height="2" fill="#6a9955" opacity="0.5"/><rect x="1320" y="180" width="6" height="2" fill="#6a9955" opacity="0.5"/><rect x="1327" y="180" width="4" height="2" fill="#6a9955" opacity="0.5"/><rect x="1332" y="180" width="5" height="2" fill="#6a9955" opacity="0.5"/><rect x="1338" y="180" width="6" height="2" fill="#6a9955" opacity="0.5"/><rect x="1345" y="180" width="6" height="2" fill="#6a9955" opacity="0.5"/><rect x="1289" y="182" width="2" height="2" fill="#c586c0" opacity="0.5"/><rect x="1292" y="182" width="5" height="2" fill="#d4d4d4" opacity="0.5"/><rect x="1298" y="182" width="1" height="2" fill="#d4d4d4" opacity="0.5"/><rect x="1300" y="182" width="5" height="2" fill="#d4d4d4" opacity="0.5"/><rect x="1305" y="182" width="6" height="2" fill="#569cd6" opacity="0.5"/><rect x="1311" y="182" width="1" height="2" fill="#d4d4d4" opacity="0.5"/><rect x="1313" y="182" width="2" height="2" fill="#c586c0" opacity="0.5"/><rect x="1291" y="184" width="7" height="2" fill="#4fc1ff" opacity="0.5"/><rect x="1298" y="184" width="11" height="2" fill="#d4d4d4" opacity="0.5"/><rect x="1309" y="184" width="16" height="2" fill="#4ec9b0" opacity="0.5"/><rect x="1325" y="184" width="1" height="2" fill="#d4d4d4" opacity="0.5"/><rect x="1327" y="184" width="8" height="2" fill="#ce9178" opacity="0.5"/><rect x="1335" y="184" width="1" height="2" fill="#d4d4d4" opacity="0.5"/><rect x="1337" y="184" width="4" height="2" fill="#d4d4d4" opacity="0.5"/><rect x="1342" y="184" width="4" height="2" fill="#d4d4d4" opacity="0.5"/><rect x="1347" y="184" width="6" height="2" fill="#d4d4d4" opacity="0.5"/><rect x="1354" y="184" width="5" height="2" fill="#d4d4d4" opacity="0.5"/><rect x="1289" y="186" width="4" height="2" fill="#c586c0" opacity="0.5"/><rect x="1291" y="188" width="7" height="2" fill="#4fc1ff" opacity="0.5"/><rect x="1298" y="188" width="10" height="2" fill="#d4d4d4" opacity="0.5"/><rect x="1308" y="188" width="16" height="2" fill="#4ec9b0" opacity="0.5"/><rect x="1324" y="188" width="1" height="2" fill="#d4d4d4" opacity="0.5"/><rect x="1326" y="188" width="8" height="2" fill="#ce9178" opacity="0.5"/><rect x="1334" y="188" width="1" height="2" fill="#d4d4d4" opacity="0.5"/><rect x="1336" y="188" width="4" height="2" fill="#d4d4d4" opacity="0.5"/><rect x="1341" y="188" width="5" height="2" fill="#d4d4d4" opacity="0.5"/><rect x="1289" y="190" width="3" height="2" fill="#c586c0" opacity="0.5"/><rect x="1287" y="192" width="3" height="2" fill="#c586c0" opacity="0.5"/><rect x="1285" y="194" width="3" height="2" fill="#c586c0" opacity="0.5"/><path d="M1391.5 830 V102.5 H1405" fill="none" stroke="#3a3a3a" stroke-width="1"/><g fill="none" stroke="#ffffff" stroke-width="1.1">
<circle cx="28.7" cy="837" r="1.9"/><circle cx="28.7" cy="847.2" r="1.9"/><circle cx="34.8" cy="839.6" r="1.9"/>
<path d="M28.7 838.9 v6.4 M28.7 844.2 c1.5 -1.3 5 -0.6 5.7 -2.8"/>
<path d="M98.3 839.6 A4.7 4.5 0 0 1 107 841.6 M106.4 844.3 A4.7 4.5 0 0 1 97.6 842.3"/>
<path d="M105.2 840.4 L107 842.4 L108.8 840.4 M95.8 843.6 L97.6 841.6 L99.4 843.6"/>
<circle cx="132" cy="842" r="5.8"/>
<path d="M129.6 839.6 L134.4 844.4 M134.4 839.6 L129.6 844.4"/>
<path d="M158.5 837.8 L164.6 846.6 H152.4 Z"/>
<path d="M158.5 840.8 v3 M158.5 844.8 v1"/>
<path d="M1350.5 836.8 H1359 V842 H1356.8 M1355.3 842.6 L1356.6 841.3"/>
<circle cx="1352" cy="841.8" r="2.4"/><path d="M1347.5 848.5 c1 -3.2 7.5 -3.2 8.5 0"/>
<path d="M1378 846.5 h10 l-1.5 -2 v-3.5 a3.5 3.5 0 0 0 -7 0 v3.5 Z M1381.5 848.5 h3"/>
</g><g fill="none" stroke="#ffffff" stroke-width="1.4" stroke-linejoin="round">
<path d="M29.5 63.5 h-4.5 a1.5 1.5 0 0 0 -1.5 1.5 v14 a1.5 1.5 0 0 0 1.5 1.5 h11 a1.5 1.5 0 0 0 1.5 -1.5 v-4.5"/>
<path d="M31 57.5 h7 l5.5 5.5 v10 a1.5 1.5 0 0 1 -1.5 1.5 h-11 a1.5 1.5 0 0 1 -1.5 -1.5 v-14 a1.5 1.5 0 0 1 1.5 -1.5 Z"/>
<path d="M38 57.5 v5.5 h5.5"/>
</g>
<g fill="none" stroke="#858585" stroke-width="1.3">
<circle cx="37" cy="113.2" r="7.2"/><path d="M31.8 118.6 L24 127.5"/>
<circle cx="28.7" cy="156.6" r="3"/><circle cx="39.3" cy="161" r="3"/><circle cx="28.7" cy="173.3" r="3"/>
<path d="M28.7 159.6 v10.7 M28.7 168.5 c2 -1.5 4 -1.2 6.5 -1.8 c2 -0.6 3.5 -2 3.8 -2.8"/>
<path d="M30.3 211.5 V201.5 L45 211.2 L35.9 217.3"/>
<ellipse cx="28.3" cy="219.9" rx="3.5" ry="4.4"/><path d="M24.8 216.9 H31.8 M26 215.6 A2.4 2.2 0 0 1 30.6 215.6 M24.8 218 L22.6 216 M31.8 218 L34 216 M24.6 220.3 H22.2 M32 220.3 H34.4 M25 222.6 L22.7 224.6 M31.6 222.6 L33.9 224.6"/>
<path d="M23.2 254.2 h8.3 v18 h-8.3 Z M23.2 263.2 h17 v9 h-8.7"/>
<rect x="36.5" y="250" width="9" height="9" rx="1.2"/>
<circle cx="34" cy="758.9" r="11.2"/><circle cx="34" cy="756" r="4.2"/><path d="M27 767.5 c1.5 -3.5 4 -5 7 -5 c3 0 5.5 1.5 7 5"/>
</g><path d="M31.09 799.78 L32.34 799.38 L32.42 795.61 L35.58 795.61 L35.66 799.38 L36.91 799.78 L38.07 800.38 L40.80 797.77 L43.03 800.00 L40.42 802.73 L41.02 803.89 L41.42 805.14 L45.19 805.22 L45.19 808.38 L41.42 808.46 L41.02 809.71 L40.42 810.87 L43.03 813.60 L40.80 815.83 L38.07 813.22 L36.91 813.82 L35.66 814.22 L35.58 817.99 L32.42 817.99 L32.34 814.22 L31.09 813.82 L29.93 813.22 L27.20 815.83 L24.97 813.60 L27.58 810.87 L26.98 809.71 L26.58 808.46 L22.81 808.38 L22.81 805.22 L26.58 805.14 L26.98 803.89 L27.58 802.73 L24.97 800.00 L27.20 797.77 L29.93 800.38 Z" fill="none" stroke="#858585" stroke-width="1.3" stroke-linejoin="round"/><circle cx="34" cy="806.8" r="2.5" fill="none" stroke="#858585" stroke-width="1.3"/><g fill="none" stroke="rgba(220,220,220,0.5)" stroke-width="1.4"><path transform="translate(1246.6,818.8)" d="M5.5 1 L1.5 2.5 M1 5 H6.5 M3.8 2.5 V15.5 M3.8 6 L1 11 M3.8 6.5 L6.5 9 M8 1.5 L14.5 5.5 M14.5 1.5 L8 5.5 M7.5 7 H15.5 M10.5 5.5 L8 12 M9.5 9.5 H15 V13.5 M9.5 9.5 V13.5 M12.2 8 V15.5"/><path transform="translate(1265.0,818.8)" d="M3 5.5 H13 M1 15 H15 M8 1 V15"/><path transform="translate(1283.3,818.8)" d="M0.5 5 H5.5 M3 1 V14.5 L1.8 13.5 M0.5 11 L5.5 8.5 M7 1.5 H15 V5 H7 M7 1.5 V8 Q7 13 6 15.5 M11 6.5 V15.5 M8.5 8 V10.5 H14 V8 M8.5 12 V15.5 H14.5 V12"/><path transform="translate(1301.6,818.8)" d="M8 0.5 L1 7 M8 0.5 L15 7 M4.5 6.5 H11.5 M3 9.5 H13 M1.5 15 H14.5 M8 6.5 V15 M5 11 L6 13.5 M11 11 L10 13.5"/><path transform="translate(1320.0,818.8)" d="M0.5 5 H5.5 M3 1 V14.5 L1.8 13.5 M0.5 11 L5.5 8.5 M7 4 H15.5 M11 1 V7 M8 7.5 H14.5 L8.5 15.5 M9.5 10 L15.5 15.5"/><path transform="translate(1338.3,818.8)" d="M1 5 H15 M8 1 V15.5 M8 6 L1.5 13 M8 6 L15 13 M11.5 1.5 L12.8 3"/><path transform="translate(1356.6,818.8)" d="M3 0.8 L4 2 M0.8 4.5 H5.5 L1 10.5 M3.5 7.5 V15.5 M3.8 9 L6 11 M7.5 6 H15 M11.3 1.5 V15 M7 15 H15.8"/><path transform="translate(1375.0,818.8)" d="M15 1.5 H1.5 V15 H15.5 M4.5 4.5 L12.5 12 M12 4.5 L4.5 12.5"/></g></svg>
<div class="a" style="left:1229px;top:814px;height:22px;line-height:22px;font-size:17px;color:rgba(215,215,215,0.5)">@</div>
</body></html>
